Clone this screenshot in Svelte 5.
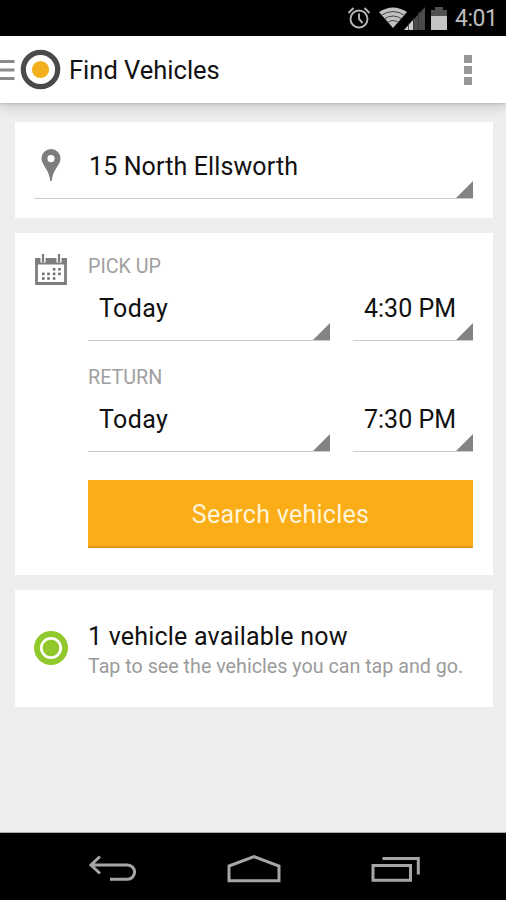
<script lang="ts">
	let location = $state('15 North Ellsworth');
	const trips = [
		{ label: 'Pick up', day: 'Today', time: '4:30 PM' },
		{ label: 'Return', day: 'Today', time: '7:30 PM' }
	];
	const dots = [
		[17.8, 14], [23.2, 14],
		[7, 18.6], [12.2, 18.6], [17.8, 18.6], [23.2, 18.6],
		[7, 23.2], [12.2, 23.2], [17.8, 23.2]
	];
</script>

<div class="screen">
	<div class="status">
		<svg class="alarm" width="24" height="24" viewBox="0 0 24 24" fill="none" stroke="#b5b5b5" stroke-width="1.9">
			<circle cx="12" cy="13" r="8.5" />
			<path d="M12 7.5V13l3.5 4M1.500 7l5-5M22.500 7l-5-5" />
		</svg>
		<svg class="wifi" width="28" height="22" viewBox="0 0 28 22">
			<path d="M0 5Q14-4 28 5L14 21Z" fill="#c0c0c0" />
			<path d="M2 8.500Q14 .5 26 8.500M5 12Q14 6 23 12M8.500 15.500Q14 11.500 19.500 15.500" fill="none" stroke="#444" stroke-width="1" />
		</svg>
		<svg class="signal" width="21" height="23" viewBox="0 0 21 23">
			<path d="M21 0V23H0Z" fill="#4a4a4a" />
			<path d="M9 13V23H0Z" fill="#d0d0d0" />
			<path d="M4.500 16V23M9.500 11V23M14.500 5V23" stroke="#333" stroke-width=".8" />
		</svg>
		<svg class="battery" width="16" height="23" viewBox="0 0 16 23">
			<path d="M0 3H4V0H12V3H16V9H0Z" fill="#505050" />
			<path d="M0 9H16V23H0Z" fill="#c4c4c4" />
		</svg>
		<span class="clock">4:01</span>
	</div>

	<header class="bar">
		<svg class="drawer" width="15" height="22" viewBox="0 0 15 22">
			<path d="M0 2.500H14.500M0 11H14.500M0 19.500H14.500" stroke="#8a8a8a" stroke-width="2.800" />
		</svg>
		<svg class="logo" width="41" height="41" viewBox="0 0 41 41">
			<circle cx="20.500" cy="20.500" r="17.200" fill="#fff" stroke="#4a4a4a" stroke-width="5.200" />
			<circle cx="20.500" cy="20.500" r="8.600" fill="#f3b01d" />
		</svg>
		<h1>Find Vehicles</h1>
		<button class="overflow" aria-label="More options">
			<i></i><i></i><i></i>
		</button>
	</header>

	<main>
		<section class="card place">
			<div class="spinner">
				<svg class="pin" width="20" height="33" viewBox="0 0 20 33">
					<path fill-rule="evenodd" d="M10 0A9.500 9.500 0 0 0 .5 9.500C.5 16 8 20 9.300 32H10.700C12 20 19.500 16 19.500 9.500A9.500 9.500 0 0 0 10 0ZM10 6A3.600 3.600 0 1 1 10 13.200A3.600 3.600 0 1 1 10 6Z" fill="#7d7d7d" />
				</svg>
				<span class="address">{location}</span>
			</div>
		</section>

		<section class="card form">
			<svg class="calendar" width="32" height="32" viewBox="0 0 32 32">
				<path d="M1.500 5V29.500H30.500V5" fill="#fff" stroke="#7d7d7d" stroke-width="2.800" />
				<path d="M.1 4H31.900V10.500H.1Z" fill="#7d7d7d" />
				<path d="M8 0V8.500M24 0V8.500" stroke="#fff" stroke-width="5" />
				<path d="M8 0V8.500M24 0V8.500" stroke="#7d7d7d" stroke-width="2.200" />
				{#each dots as [x, y]}
					<rect {x} {y} width="2.600" height="2.600" fill="#6f6f6f" />
				{/each}
			</svg>
			<div class="fields">
				{#each trips as trip}
					<div class="label">{trip.label}</div>
					<div class="row">
						<div class="spinner day">{trip.day}</div>
						<div class="spinner time">{trip.time}</div>
					</div>
				{/each}
				<button class="search">Search vehicles</button>
			</div>
		</section>

		<section class="card available">
			<svg class="ring" width="34" height="34" viewBox="0 0 34 34">
				<circle cx="17" cy="17" r="17" fill="#91c82b" />
				<circle cx="17" cy="17" r="9.700" fill="none" stroke="#fff" stroke-width="2.700" />
			</svg>
			<div>
				<div class="headline">1 vehicle available now</div>
				<div class="hint">Tap to see the vehicles you can tap and go.</div>
			</div>
		</section>
	</main>

	<nav>
		<svg width="48" height="28" viewBox="0 0 48 28">
			<path d="M11 1.500L2 10L11 18.500M2.500 10H38.500A7 7 0 0 1 38.500 24.200H21" />
		</svg>
		<svg width="54" height="28" viewBox="0 0 54 28">
			<path d="M2 11L27 1.700L52 11V25.800H2Z" />
		</svg>
		<svg width="50" height="28" viewBox="0 0 50 28">
			<path d="M2 10.500H39.500V25.300H2ZM11.500 3.500H47.300V19.500" />
		</svg>
	</nav>
</div>

<style>
	:global(body) {
		margin: 0;
	}
	.screen {
		display: flex;
		flex-direction: column;
		width: 506px;
		height: 900px;
		overflow: hidden;
		background: #eee;
		color: #111;
		font-family: Roboto, 'Liberation Sans', sans-serif;
	}
	svg {
		display: block;
		flex: none;
	}
	button {
		border: 0;
		padding: 0;
		background: none;
		font: inherit;
	}
	.status {
		display: flex;
		align-items: center;
		height: 36px;
		padding-left: 347px;
		background: #000;
	}
	.wifi {
		margin-left: 8px;
	}
	.signal {
		margin-left: -3px;
	}
	.battery {
		margin-left: 6px;
	}
	.clock {
		margin-left: 8px;
		padding-top: 2px;
		color: #bdbdbd;
		font-size: 23px;
		letter-spacing: -0.5px;
		line-height: 36px;
		white-space: nowrap;
	}
	.bar {
		display: flex;
		align-items: center;
		height: 67px;
		background: #fff;
		box-shadow: 0 1px 2px rgba(0, 0, 0, 0.14), 0 4px 12px rgba(0, 0, 0, 0.16);
	}
	.logo {
		margin-left: 5px;
	}
	h1 {
		flex: 1;
		margin: 0 0 0 8px;
		padding-top: 2px;
		font-size: 25.5px;
		font-weight: 400;
		line-height: 67px;
	}
	.overflow {
		display: flex;
		flex-direction: column;
		gap: 3px;
		margin-right: 34px;
	}
	.overflow i {
		width: 8px;
		height: 8px;
		background: #989898;
	}
	main {
		display: flex;
		flex: 1;
		flex-direction: column;
		gap: 15px;
		padding: 19px 13px 0 15px;
	}
	.card {
		box-sizing: border-box;
		background: #fff;
	}
	.spinner {
		box-sizing: border-box;
		border-bottom: 1px solid #ccc;
		background: linear-gradient(135deg, transparent calc(50% - 0.5px), #838383 calc(50% + 0.5px)) right bottom / 17px 17px no-repeat;
	}
	.place {
		height: 96px;
		padding: 12px 20px 0 19px;
	}
	.place .spinner {
		display: flex;
		height: 65px;
		padding-left: 7px;
	}
	.pin {
		margin-top: 15px;
	}
	.address {
		margin-left: 28px;
		font-size: 25px;
		letter-spacing: 0.12px;
		line-height: 66px;
	}
	.form {
		display: flex;
		height: 342px;
		padding: 20px 20px 0;
	}
	.calendar {
		margin-top: 1px;
	}
	.fields {
		flex: 1;
		margin-left: 21px;
	}
	.label {
		height: 27px;
		color: #a0a0a0;
		font-size: 19.7px;
		line-height: 28px;
		text-transform: uppercase;
	}
	.row {
		display: flex;
		gap: 23px;
		height: 84px;
	}
	.row .spinner {
		height: 61px;
		font-size: 25px;
		line-height: 58px;
	}
	.day {
		flex: 1;
		padding-left: 11px;
		letter-spacing: 0.4px;
	}
	.time {
		width: 120px;
		padding-left: 11px;
	}
	.search {
		width: 100%;
		height: 68px;
		margin-top: 5px;
		border-bottom: 2px solid #e0951a;
		padding-top: 3px;
		background: #fbad18;
		color: #fff4d8;
		font-size: 25px;
		letter-spacing: 0.27px;
	}
	.available {
		display: flex;
		height: 117px;
		padding: 31px 19px 0;
	}
	.ring {
		margin: 10px 20px 0 0;
	}
	.headline {
		font-size: 25px;
		letter-spacing: 0.2px;
		line-height: 32px;
	}
	.hint {
		color: #9b9b9b;
		font-size: 19.7px;
		line-height: 28px;
		white-space: nowrap;
	}
	nav {
		display: flex;
		align-items: center;
		gap: 90px;
		box-sizing: border-box;
		height: 68px;
		border-top: 1px solid #aaa;
		padding: 4px 0 0 89px;
		background: #000;
	}
	nav path {
		fill: none;
		stroke: #a6a6a6;
		stroke-width: 3;
	}
</style>
